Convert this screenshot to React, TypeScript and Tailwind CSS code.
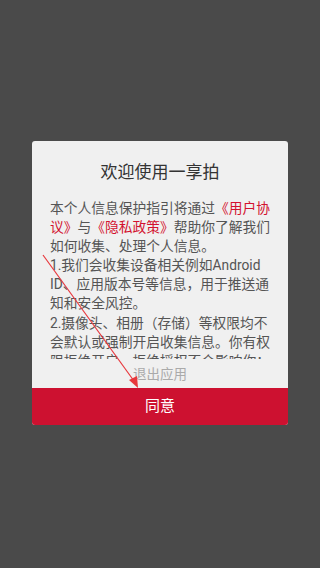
import React from 'react';

const font = { fontFamily: 'Roboto, "Noto Sans CJK SC", sans-serif' };

const Red: React.FC<{ children: React.ReactNode }> = ({ children }) => (
  <span className="text-[#d3122f]">{children}</span>
);

const App: React.FC = () => {
  // body lines are broken by hand so the wrap matches the screenshot
  const lines: React.ReactNode[] = [
    <>本个人信息保护指引将通过<Red>《用户协</Red></>,
    <><Red>议》</Red>与<Red>《隐私政策》</Red>帮助你了解我们</>,
    <>如何收集、处理个人信息。</>,
    <>1.我们会收集设备相关例如Android</>,
    <>ID、应用版本号等信息，用于推送通</>,
    <>知和安全风控。</>,
    <>2.摄像头、相册（存储）等权限均不</>,
    <>会默认或强制开启收集信息。你有权</>,
    <>限拒绝开启，拒绝授权不会影响你；</>,
  ];

  return (
    <div className="relative w-[320px] h-[568px] bg-[#4a4a4a] flex items-start justify-center" style={font}>
      <div className="mt-[141px] w-[256px] rounded-[3px] bg-[#f0f0f0] flex flex-col overflow-hidden">
        <div className="pt-[19px] h-[43px] text-center text-[17px] leading-[24px] text-[#333]">
          欢迎使用一享拍
        </div>
        <div className="mt-[15px] h-[160px] overflow-hidden px-[18px] text-[13.75px] leading-[19.1px] text-[#555]">
          {lines.map((l, i) => (
            <div key={i} className="whitespace-nowrap">
              {l}
            </div>
          ))}
        </div>
        <div className="h-[29px] flex items-center justify-center text-[13.5px] leading-[18px] text-[#aaa]">
          退出应用
        </div>
        <button className="h-[37px] bg-[#cd1130] text-white text-[15px]">同意</button>
      </div>

      {/* red annotation arrow drawn on top of the screenshot */}
      <svg className="absolute left-0 top-0 pointer-events-none" width="320" height="568">
        <line x1="43" y1="255" x2="134" y2="381" stroke="#e8383d" strokeWidth="1.2" />
        <polygon points="138,388 129,380 137,376" fill="#e8383d" />
      </svg>
    </div>
  );
};

export default App;
